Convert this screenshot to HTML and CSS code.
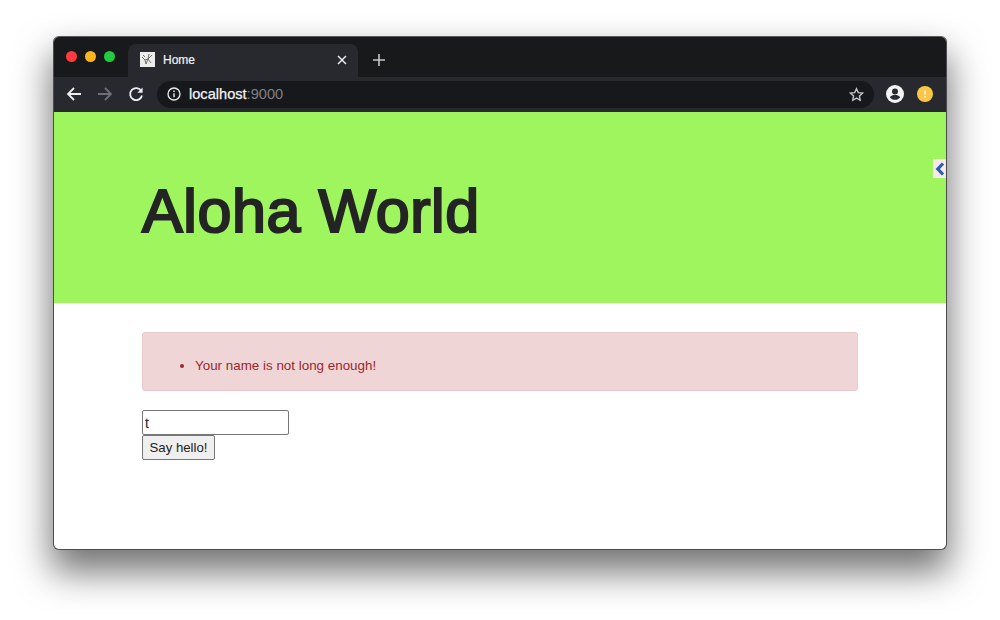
FILE: index.html
```html
<!DOCTYPE html>
<html lang="en">
<head>
<meta charset="utf-8">
<title>Home</title>
<link rel="stylesheet" href="styles.css">
</head>
<body>
<div class="window">
  <div class="tabstrip">
    <div class="lights">
      <span class="light red"></span>
      <span class="light yellow"></span>
      <span class="light green"></span>
    </div>
    <div class="tab">
      <svg class="favicon" width="15" height="15" viewBox="0 0 15 15"><rect width="15" height="15" fill="#ececec"/><path d="M2 5l3 3 1 4 2-5 3 4M5 8l3-1 4-4M8 7l1-5M3 3l2 2" fill="none" stroke="#6f6f6f" stroke-width="1"/></svg>
      <span class="tab-title">Home</span>
      <svg class="tab-close" width="10" height="10" viewBox="0 0 10 10"><path d="M1 1l8 8M9 1l-8 8" stroke="#e8eaed" stroke-width="1.5"/></svg>
    </div>
    <svg class="new-tab" width="12" height="12" viewBox="0 0 12 12"><path d="M6 0v12M0 6h12" stroke="#c4c7cc" stroke-width="1.6"/></svg>
  </div>
  <div class="toolbar">
    <svg class="nav" width="16" height="16" viewBox="0 0 16 16"><path d="M15 8H2M8 2L2 8l6 6" fill="none" stroke="#eceef0" stroke-width="1.8"/></svg>
    <svg class="nav" width="16" height="16" viewBox="0 0 16 16"><path d="M1 8h13M8 2l6 6-6 6" fill="none" stroke="#6e7074" stroke-width="1.8"/></svg>
    <svg class="nav" width="16" height="16" viewBox="0 0 16 16"><path d="M13.300 5A6 6 0 1 0 14 9.500" fill="none" stroke="#eceef0" stroke-width="1.8"/><path d="M14.600 1.600v5.200H9.400z" fill="#eceef0"/></svg>
    <div class="omnibox">
      <svg width="14" height="14" viewBox="0 0 14 14"><circle cx="7" cy="7" r="6" fill="none" stroke="#eceef0" stroke-width="1.3"/><path d="M7 6.200v4M7 3.600v1.400" stroke="#eceef0" stroke-width="1.4"/></svg>
      <span class="url"><span class="host">localhost</span><span class="port">:9000</span></span>
      <svg class="star" width="15" height="15" viewBox="0 0 16 16"><path d="M8 1.800l1.900 4.200 4.600.5-3.400 3.100.9 4.500L8 11.800l-4 2.300.9-4.500L1.500 6.500l4.600-.5z" fill="none" stroke="#c4c7cc" stroke-width="1.4"/></svg>
    </div>
    <svg class="avatar" width="18" height="18" viewBox="0 0 18 18"><circle cx="9" cy="9" r="9" fill="#f1f3f4"/><circle cx="9" cy="6.600" r="3" fill="#2a2b30"/><path d="M3.800 12.200c1-1.700 3.200-2.300 5.200-2.300s4.200.6 5.200 2.300C13 13.800 11 14.800 9 14.800s-4-1-5.200-2.600z" fill="#2a2b30"/></svg>
    <svg class="update" width="16" height="16" viewBox="0 0 16 16"><circle cx="8" cy="8" r="8" fill="#fdc544"/><path d="M8 4.500v4M8 10v1.600" stroke="#fff" stroke-width="1.5"/></svg>
  </div>
  <div class="page">
    <header class="hero">
      <h1 class="title">Aloha World</h1>
      <button class="side-tab" type="button" aria-label="Collapse"><svg width="10" height="14" viewBox="0 0 10 14"><path d="M8 1.500L2.800 7 8 12.500" fill="none" stroke="#2a5fae" stroke-width="3.2"/></svg></button>
    </header>
    <main class="content">
      <div class="alert"><ul class="errors"><li>Your name is not long enough!</li></ul></div>
      <form class="greeting">
        <input class="name" type="text" value="t">
        <button class="submit" type="button">Say hello!</button>
      </form>
    </main>
  </div>
</div>
</body>
</html>
```
FILE: styles.css
```css
* { box-sizing: border-box; }
html, body { height: 100%; }
body {
  margin: 0;
  padding: 36px 53px 70px 53px;
  background: #fff;
  overflow: hidden;
  font-family: "Liberation Sans", Arial, sans-serif;
}
.window {
  height: 514px;
  display: flex;
  flex-direction: column;
  border: 1px solid #4c4c4e;
  border-top-color: #5a5a5c;
  border-radius: 6px;
  overflow: hidden;
  background: #fff;
  box-shadow: 0 20px 36px 2px rgba(0, 0, 0, .55);
}
.tabstrip {
  height: 40px;
  flex: none;
  display: flex;
  align-items: flex-end;
  background: #18191b;
}
.lights {
  width: 74px;
  flex: none;
  display: flex;
  gap: 8px;
  align-self: flex-start;
  padding: 14px 0 0 12px;
}
.light { width: 11px; height: 11px; border-radius: 50%; }
.red { background: #ff3b41; }
.yellow { background: #ffb31f; }
.green { background: #23c93f; }
.tab {
  width: 230px;
  height: 33px;
  flex: none;
  display: flex;
  align-items: center;
  padding: 0 11px 2px 12px;
  background: #28292e;
  border-radius: 8px 8px 0 0;
}
.favicon { flex: none; }
.tab-title {
  margin-left: 8px;
  flex: 1;
  font-size: 12px;
  color: #f1f3f4;
  -webkit-text-stroke: .2px #f1f3f4;
}
.new-tab { margin: 0 0 11px 15px; }
.toolbar {
  height: 35px;
  flex: none;
  display: flex;
  align-items: center;
  padding: 0 0 1px 12px;
  background: #28292e;
}
.nav { margin-right: 15px; flex: none; }
.nav:nth-child(3) { margin-right: 13px; }
.omnibox {
  width: 717px;
  height: 27px;
  flex: none;
  display: flex;
  align-items: center;
  gap: 8px;
  padding: 0 10px;
  background: #17181b;
  border-radius: 14px;
}
.url { flex: 1; font-size: 14.6px; }
.host { color: #f1f3f4; -webkit-text-stroke: .25px #f1f3f4; }
.port { color: #7f8186; }
.avatar { margin-left: 12px; flex: none; }
.update { margin-left: 13px; flex: none; }
.page { flex: 1; display: flex; flex-direction: column; }
.hero {
  position: relative;
  height: 191px;
  flex: none;
  display: flex;
  align-items: center;
  padding: 6px 88px 0;
  background: #9ff55d;
}
.title {
  margin: 0;
  font-size: 61px;
  font-weight: 400;
  letter-spacing: .6px;
  -webkit-text-stroke: 2.2px #242424;
  color: #242424;
}
.side-tab {
  position: absolute;
  top: 47px;
  right: 0;
  width: 13px;
  height: 19px;
  padding: 0;
  border: 0;
  display: flex;
  align-items: center;
  justify-content: center;
  background: #f8e8ea;
}
.content { padding: 29px 88px 0 88px; }
.alert {
  height: 59px;
  border: 1px solid #e9c9cb;
  border-radius: 3px;
  background: #efd5d6;
  color: #9b2730;
  font-size: 13.4px;
}
.errors { margin: 0; padding: 25px 0 0 52px; line-height: 16px; }
.greeting { display: flex; flex-direction: column; align-items: flex-start; margin-top: 19px; }
.name {
  width: 147px;
  height: 25px;
  padding: 1px 2px;
  border: 1px solid #767676;
  border-radius: 2px;
  font: 14px "Liberation Sans", Arial, sans-serif;
  color: #222;
  background: #fff;
}
.submit {
  width: 73px;
  height: 25px;
  padding: 0;
  border: 1px solid #767676;
  border-radius: 2px;
  background: #efefef;
  font: 13.2px "Liberation Sans", Arial, sans-serif;
  color: #222;
}
```
